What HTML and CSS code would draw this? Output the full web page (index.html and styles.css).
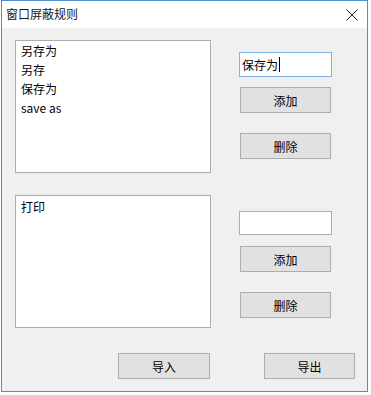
FILE: index.html
```html
<!DOCTYPE html>
<html lang="zh-CN">

<head>
    <meta charset="UTF-8">
    <meta name="viewport" content="width=device-width, initial-scale=1.0">
    <title>窗口屏蔽规则</title>
    <link rel="stylesheet" href="styles.css">
</head>

<body>
    <div class="window">
        <div class="title-bar">
            <span class="title">窗口屏蔽规则</span>
            <svg class="close-icon" width="12" height="12" viewBox="0 0 12 12">
                <path d="M0.5 0.5 L11.5 11.5 M11.5 0.5 L0.5 11.5" stroke="#222" stroke-width="1" fill="none" />
            </svg>
        </div>
        <div class="content">
            <div class="section first">
                <div class="list-box">
                    <div class="list-item">另存为</div>
                    <div class="list-item">另存</div>
                    <div class="list-item">保存为</div>
                    <div class="list-item">save as</div>
                </div>
                <div class="controls">
                    <div class="text-box focused">保存为<span class="caret"></span></div>
                    <button class="btn add-btn">添加</button>
                    <button class="btn del-btn">删除</button>
                </div>
            </div>
            <div class="section second">
                <div class="list-box">
                    <div class="list-item">打印</div>
                </div>
                <div class="controls">
                    <div class="text-box"></div>
                    <button class="btn add-btn">添加</button>
                    <button class="btn del-btn">删除</button>
                </div>
            </div>
            <div class="footer">
                <button class="btn import-btn">导入</button>
                <button class="btn export-btn">导出</button>
            </div>
        </div>
    </div>
</body>

</html>
```

FILE: styles.css
```css
body {
    margin: 0;
    background-color: #fbfdff;
    font-family: "Noto Sans CJK SC", "Microsoft YaHei", sans-serif;
    font-size: 12px;
    color: #000000;
}

.window {
    box-sizing: border-box;
    width: 367px;
    height: 392px;
    margin-left: 1px;
    border: 1px solid #4f8fd0;
    background-color: #f0f0f0;
    display: flex;
    flex-direction: column;
}

.title-bar {
    height: 27px;
    background-color: #ffffff;
    display: flex;
    align-items: center;
    justify-content: space-between;
    padding: 0 9px 0 4px;
}

.title {
    color: #1a1a1a;
    line-height: 16px;
    margin-top: -1px;
}

.close-icon {
    display: block;
    margin-top: 1px;
}

.content {
    padding: 12px 0 0 13px;
}

.section {
    display: flex;
}

.second {
    margin-top: 22px;
}

.list-box {
    box-sizing: border-box;
    width: 196px;
    height: 133px;
    background-color: #ffffff;
    border: 1px solid #acacac;
    padding: 0 5px;
}

.list-item {
    height: 19px;
    line-height: 19px;
}

.second .list-item {
    margin-top: 1px;
}

.controls {
    margin-left: 28px;
    width: 93px;
    display: flex;
    flex-direction: column;
}

.first .controls {
    padding-top: 12px;
}

.second .controls {
    padding-top: 16px;
}

.text-box {
    box-sizing: border-box;
    height: 25px;
    background-color: #ffffff;
    border: 1px solid #abadb3;
    padding: 0 2px;
    line-height: 23px;
    display: flex;
    align-items: center;
}

.second .text-box {
    height: 24px;
}

.text-box.focused {
    border-color: #7eb4ea;
}

.caret {
    display: inline-block;
    width: 1px;
    height: 15px;
    background-color: #000000;
    margin-left: 1px;
}

.btn {
    box-sizing: border-box;
    height: 26px;
    padding: 0;
    background-color: #e1e1e1;
    border: 1px solid #adadad;
    font-family: "Noto Sans CJK SC", "Microsoft YaHei", sans-serif;
    font-size: 12px;
    color: #000000;
    cursor: pointer;
}

.controls .btn {
    width: 91px;
    margin-left: 1px;
}

.add-btn {
    margin-top: 10px;
}

.second .add-btn {
    margin-top: 11px;
}

.del-btn {
    margin-top: 20px;
}

.footer {
    display: flex;
    margin-top: 25px;
    padding-left: 103px;
}

.import-btn {
    width: 92px;
}

.export-btn {
    width: 91px;
    margin-left: 54px;
}
```
